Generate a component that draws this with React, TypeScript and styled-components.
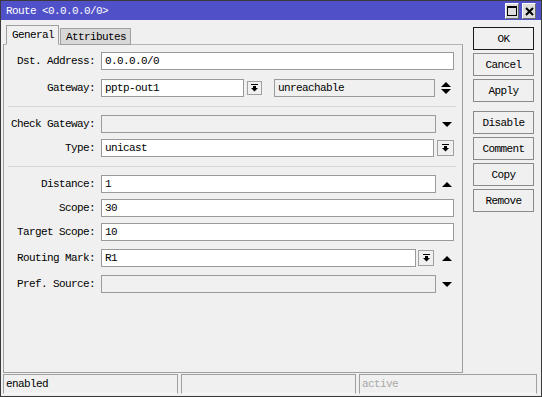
import React from "react";
import styled, { createGlobalStyle } from "styled-components";

const Global = createGlobalStyle`
  html, body { margin: 0; padding: 0; background: #f0f0f0; }
  body { font-family: "Liberation Mono", "DejaVu Sans Mono", monospace; font-size: 11px; letter-spacing: -0.6px; }
  * { box-sizing: border-box; }
`;

const Window = styled.div`
  width: 542px;
  height: 397px;
  border: 1px solid #3a3a3a;
  background: #f0f0f0;
  display: flex;
  flex-direction: column;
  color: #000;
  overflow: hidden;
`;

const TitleBar = styled.div`
  height: 19px;
  flex: none;
  background: #5050c8;
  color: #fff;
  display: flex;
  align-items: center;
  justify-content: space-between;
  padding: 0 5px;
  white-space: pre;
`;

const TitleButtons = styled.div`
  display: flex;
  gap: 3px;
  margin-top: 1px;
`;

const TitleButton = styled.div`
  width: 14px;
  height: 16px;
  background: #dcdcdc;
  border: 1px solid;
  border-color: #ffffff #6a6a6a #6a6a6a #ffffff;
  display: flex;
  align-items: center;
  justify-content: center;
`;

const Main = styled.div`
  height: 353px;
  flex: none;
  display: flex;
`;

const LeftCol = styled.div`
  width: 462px;
  padding-left: 2px;
  display: flex;
  flex-direction: column;
`;

const Tabs = styled.div`
  height: 24px;
  flex: none;
  display: flex;
  align-items: flex-end;
  padding-left: 3px;
  position: relative;
  z-index: 1;
`;

const Tab = styled.div<{ $active?: boolean }>`
  height: ${(p) => (p.$active ? 20 : 17)}px;
  padding: 0 4px 0 5px;
  display: flex;
  align-items: center;
  border: 1px solid #a0a0a0;
  border-bottom: ${(p) => (p.$active ? "1px solid #f0f0f0" : "1px solid #a0a0a0")};
  background: ${(p) => (p.$active ? "#f0f0f0" : "#d8d8d8")};
  margin-bottom: -1px;
  margin-left: ${(p) => (p.$active ? 0 : 1)}px;
  white-space: pre;
`;

const Panel = styled.div`
  flex: 1;
  border: 1px solid #a0a0a0;
  border-top-color: #b4b4b4;
  padding-top: 7px;
  display: flex;
  flex-direction: column;
`;

const Row = styled.div<{ $mt?: number }>`
  height: 18px;
  display: flex;
  align-items: center;
  padding-right: 8px;
  margin-top: ${(p) => p.$mt ?? 0}px;
`;

const Label = styled.div`
  width: 92px;
  flex: none;
  text-align: right;
  padding-right: 1px;
  margin-right: 5px;
  white-space: pre;
`;

const Field = styled.div<{ $w?: number; $ro?: boolean; $ml?: number }>`
  height: 18px;
  ${(p) => (p.$w ? `width: ${p.$w}px; flex: none;` : "flex: 1;")}
  margin-left: ${(p) => p.$ml ?? 0}px;
  border: 1px solid #9a9a9a;
  background: ${(p) => (p.$ro ? "#f0f0f0" : "#ffffff")};
  display: flex;
  align-items: center;
  padding-left: 3px;
  white-space: pre;
`;

const DropBtn = styled.div<{ $ml?: number; $w?: number; $h?: number }>`
  width: ${(p) => p.$w ?? 16}px;
  height: ${(p) => p.$h ?? 16}px;
  flex: none;
  margin-left: ${(p) => p.$ml ?? 3}px;
  border: 1px solid #a0a0a0;
  background: #f0f0f0;
  display: flex;
  align-items: center;
  justify-content: center;
`;

const ArrowBox = styled.div<{ $ml?: number }>`
  width: 14px;
  flex: none;
  margin-left: ${(p) => p.$ml ?? 4}px;
  display: flex;
  flex-direction: column;
  align-items: center;
  justify-content: center;
  gap: 2px;
`;

const Separator = styled.div<{ $mt: number; $mb: number }>`
  height: 1px;
  flex: none;
  background: #d6d6d6;
  margin: ${(p) => p.$mt}px 6px ${(p) => p.$mb}px 4px;
`;

const ButtonCol = styled.div`
  width: 61px;
  margin-left: 10px;
  padding-top: 7px;
  display: flex;
  flex-direction: column;
  gap: 3px;
`;

const Button = styled.div<{ $default?: boolean; $mt?: number }>`
  height: 23px;
  flex: none;
  border: 1px solid ${(p) => (p.$default ? "#1a1a1a" : "#8a8a8a")};
  background: #f0f0f0;
  display: flex;
  align-items: center;
  justify-content: center;
  padding-top: 1px;
  margin-top: ${(p) => p.$mt ?? 0}px;
`;

const StatusBar = styled.div`
  height: 20px;
  flex: none;
  margin-top: 1px;
  display: flex;
  gap: 3px;
  padding: 0 4px 0 2px;
`;

const StatusBox = styled.div<{ $w?: number; $muted?: boolean }>`
  ${(p) => (p.$w ? `width: ${p.$w}px; flex: none;` : "flex: 1;")}
  height: 20px;
  border: 1px solid;
  border-color: #a0a0a0 #a0a0a0 #f8f8f8 #a0a0a0;
  display: flex;
  align-items: center;
  padding-left: 2px;
  color: ${(p) => (p.$muted ? "#a8a8a8" : "#000")};
`;

const DropIcon = () => (
  <svg width="7" height="8" viewBox="0 0 7 8">
    <rect x="0" y="0" width="7" height="1" fill="#000" />
    <rect x="2" y="2" width="3" height="2" fill="#000" />
    <polygon points="0,4 7,4 3.5,7.5" fill="#000" />
  </svg>
);

const Up = () => (
  <svg width="10" height="5" viewBox="0 0 10 5">
    <polygon points="0,5 10,5 5,0" fill="#000" />
  </svg>
);

const Down = () => (
  <svg width="10" height="5" viewBox="0 0 10 5">
    <polygon points="0,0 10,0 5,5" fill="#000" />
  </svg>
);

export default function App() {
  return (
    <>
      <Global />
      <Window>
        <TitleBar>
          <span>Route &lt;0.0.0.0/0&gt;</span>
          <TitleButtons>
            <TitleButton>
              <svg width="10" height="10" viewBox="0 0 10 10">
                <rect x="0.5" y="0.5" width="9" height="9" fill="none" stroke="#000" />
                <rect x="0" y="0" width="10" height="2" fill="#000" />
              </svg>
            </TitleButton>
            <TitleButton>
              <svg width="9" height="9" viewBox="0 0 9 9">
                <path d="M1 1 L8 8 M8 1 L1 8" stroke="#000" strokeWidth="2" />
              </svg>
            </TitleButton>
          </TitleButtons>
        </TitleBar>
        <Main>
          <LeftCol>
            <Tabs>
              <Tab $active>General</Tab>
              <Tab>Attributes</Tab>
            </Tabs>
            <Panel>
              <Row>
                <Label>Dst. Address:</Label>
                <Field>0.0.0.0/0</Field>
              </Row>
              <Row $mt={9}>
                <Label>Gateway:</Label>
                <Field $w={143}>pptp-out1</Field>
                <DropBtn $w={15} $h={14}>
                  <DropIcon />
                </DropBtn>
                <Field $w={161} $ml={12} $ro>
                  unreachable
                </Field>
                <ArrowBox>
                  <Up />
                  <Down />
                </ArrowBox>
              </Row>
              <Separator $mt={9} $mb={8} />
              <Row>
                <Label>Check Gateway:</Label>
                <Field $ro />
                <ArrowBox>
                  <Down />
                </ArrowBox>
              </Row>
              <Row $mt={6}>
                <Label>Type:</Label>
                <Field>unicast</Field>
                <DropBtn $w={17}>
                  <DropIcon />
                </DropBtn>
              </Row>
              <Separator $mt={9} $mb={8} />
              <Row>
                <Label>Distance:</Label>
                <Field>1</Field>
                <ArrowBox>
                  <Up />
                </ArrowBox>
              </Row>
              <Row $mt={6}>
                <Label>Scope:</Label>
                <Field>30</Field>
              </Row>
              <Row $mt={6}>
                <Label>Target Scope:</Label>
                <Field>10</Field>
              </Row>
              <Row $mt={8}>
                <Label>Routing Mark:</Label>
                <Field>R1</Field>
                <DropBtn $ml={2}>
                  <DropIcon />
                </DropBtn>
                <ArrowBox $ml={6}>
                  <Up />
                </ArrowBox>
              </Row>
              <Row $mt={8}>
                <Label>Pref. Source:</Label>
                <Field $ro />
                <ArrowBox>
                  <Down />
                </ArrowBox>
              </Row>
            </Panel>
          </LeftCol>
          <ButtonCol>
            <Button $default>OK</Button>
            <Button>Cancel</Button>
            <Button>Apply</Button>
            <Button $mt={6}>Disable</Button>
            <Button>Comment</Button>
            <Button>Copy</Button>
            <Button>Remove</Button>
          </ButtonCol>
        </Main>
        <StatusBar>
          <StatusBox $w={175}>enabled</StatusBox>
          <StatusBox $w={175} />
          <StatusBox $muted>active</StatusBox>
        </StatusBar>
      </Window>
    </>
  );
}
